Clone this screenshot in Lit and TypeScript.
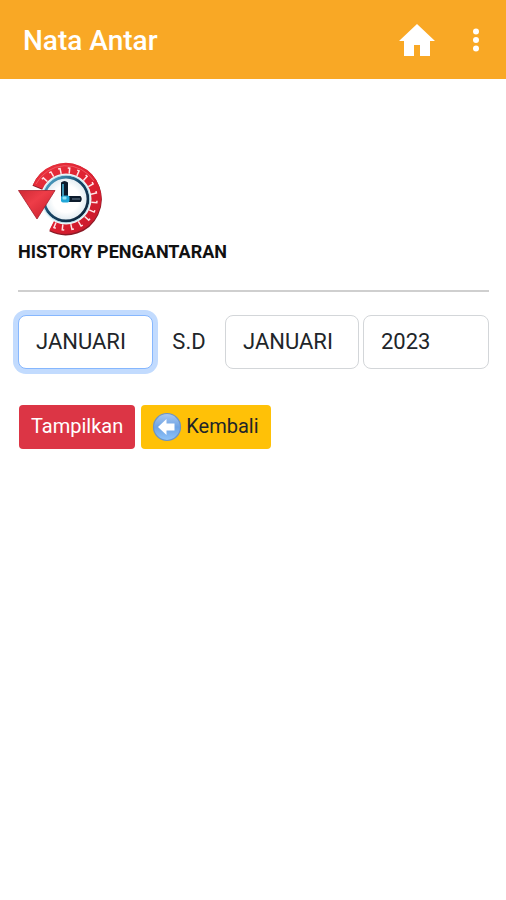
import { LitElement, html, css, svg } from "lit";
import { customElement, state } from "lit/decorators.js";

const MONTHS = [
  "JANUARI", "FEBRUARI", "MARET", "APRIL", "MEI", "JUNI",
  "JULI", "AGUSTUS", "SEPTEMBER", "OKTOBER", "NOVEMBER", "DESEMBER",
];
const YEARS = ["2023", "2022", "2021"];

// Angles in degrees, clockwise from twelve o'clock, of the marks on the red ring.
const TICKS = [-48, -30, -12, 6, 24, 42, 60, 78, 96, 114, 132, 150, 168, 186, 202];

@customElement("history-icon")
export class HistoryIcon extends LitElement {
  static styles = css`
    :host { display: block; }
    .art { display: block; width: 86px; height: 76px; }
  `;
  render() {
    return html`
      <svg class="art" viewBox="0 0 86 76" role="img" aria-label="History">
        <defs>
          <linearGradient id="ring" x1="0" y1="0" x2="1" y2="1">
            <stop offset="0" stop-color="#e8303c" />
            <stop offset="0.6" stop-color="#dc1f30" />
            <stop offset="1" stop-color="#c81a2c" />
          </linearGradient>
          <linearGradient id="rim" x1="0" y1="0" x2="1" y2="1">
            <stop offset="0" stop-color="#5cb8dc" />
            <stop offset="0.45" stop-color="#17486a" />
            <stop offset="1" stop-color="#0b1c30" />
          </linearGradient>
          <linearGradient id="arrow" x1="0" y1="0" x2="1" y2="1">
            <stop offset="0" stop-color="#cf2a35" />
            <stop offset="0.4" stop-color="#ee3d48" />
            <stop offset="1" stop-color="#c41a29" />
          </linearGradient>
          <radialGradient id="face">
            <stop offset="0.6" stop-color="#ffffff" />
            <stop offset="1" stop-color="#dfeaf0" />
          </radialGradient>
        </defs>
        <path d="M20 27A30 30 0 1 1 34 65" fill="none" stroke="#8a1a26" stroke-width="12" />
        <path d="M20 26A30 30 0 1 1 34 64" fill="none" stroke="url(#ring)" stroke-width="11" />
        <path d="M18 23A33.500 33.500 0 0 1 76 20" fill="none" stroke="#f26b72" stroke-width="1" opacity="0.7" />
        ${TICKS.map((a) => svg`
          <path d="M46.500 7h2v5.500" fill="none" stroke="#ffe3e5" stroke-width="1.500"
            transform="rotate(${a} 48 38)" />`)}
        <circle cx="48" cy="38" r="25.500" fill="#f1f8fa" />
        <circle cx="48" cy="38" r="22" fill="url(#face)" stroke="url(#rim)" stroke-width="2.800" />
        <circle cx="48" cy="38" r="23.800" fill="none" stroke="#a9d8e8" stroke-width="0.800" />
        <path d="M43 21.500q3.500-3 7 0v15h-7z" fill="#0c1b2c" />
        <path d="M45 23v13" stroke="#51bfe2" stroke-width="1.500" />
        <path d="M47 35h15.500q2.500 3 0 6H47z" fill="#0c1b2c" />
        <path d="M54 38h8" stroke="#5c7182" stroke-width="1.200" />
        <rect x="43" y="34.500" width="8.500" height="7" rx="2" fill="#20a7d8" />
        <rect x="44.500" y="35.500" width="4" height="3" rx="1" fill="#8fe3f6" />
        <path d="M0.500 29.500H37L19 58z" fill="url(#arrow)" stroke="#a51c29" stroke-width="0.800" stroke-linejoin="round" />
      </svg>
    `;
  }
}

@customElement("app-root")
export class AppRoot extends LitElement {
  @state() private active = "from";

  static styles = css`
    :host {
      display: block;
      min-height: 100vh;
      background: #fff;
      color: #212529;
      font-family: Roboto, "Liberation Sans", sans-serif;
    }
    .bar {
      display: flex;
      align-items: center;
      padding: 22px 12px 19px 23px;
      box-sizing: border-box;
      background: #f9a825;
      color: #fff;
    }
    .title {
      flex: 1;
      margin: 0;
      font-size: 28px;
      line-height: 38px;
      font-weight: 500;
    }
    .icon-button {
      display: block;
      padding: 0;
      border: 0;
      background: none;
      color: inherit;
      cursor: pointer;
    }
    .icon-button svg { display: block; fill: currentColor; }
    .home { margin-right: 23px; }
    .content { padding: 82px 17px 0 18px; }
    .heading {
      margin: 3px 0 0;
      font-size: 18px;
      line-height: 24px;
      font-weight: 700;
      color: #111;
    }
    .rule {
      margin: 26px 0 23px;
      border: 0;
      border-top: 2px solid #cfcfcf;
    }
    .filters {
      display: grid;
      grid-template-columns: 135fr 72fr 134fr 4px 126fr;
      align-items: center;
      font-size: 22px;
      line-height: 28px;
    }
    .select {
      width: 100%;
      height: 54px;
      margin: 0;
      padding: 0 17px;
      box-sizing: border-box;
      appearance: none;
      border: 1px solid #d3d6d9;
      border-radius: 8px;
      outline: 0;
      background: #fff;
      color: #212529;
      font: inherit;
    }
    .select.active {
      border-color: #86b7fe;
      box-shadow: 0 0 0 5px #c2dbfe;
    }
    .year { grid-column: 5; }
    .until { text-align: center; }
    .actions { display: flex; gap: 6px; margin-top: 36px; padding-left: 1px; }
    .button {
      display: flex;
      align-items: center;
      gap: 4px;
      height: 44px;
      padding: 0 12px 2px;
      border: 0;
      border-radius: 4px;
      font: inherit;
      font-size: 20px;
      line-height: 24px;
      cursor: pointer;
    }
    .show { background: #dc3545; color: #fff; }
    .back { background: #ffc107; color: #212529; }
    .back svg { display: block; margin: 2px 0 0 -1px; }
  `;

  private monthSelect(id: string, label: string) {
    return html`
      <select
        class="select ${this.active === id ? "active" : ""}"
        aria-label=${label}
        @focus=${() => (this.active = id)}
      >
        ${MONTHS.map((m) => html`<option>${m}</option>`)}
      </select>
    `;
  }

  render() {
    return html`
      <header class="bar">
        <h1 class="title">Nata Antar</h1>
        <button class="icon-button home" aria-label="Home">
          <svg width="36" height="34" viewBox="0 0 36 34">
            <path d="M18 0L0 17h5v15h10V21h6v11h10V17h5z" />
          </svg>
        </button>
        <button class="icon-button" aria-label="Menu">
          <svg width="36" height="36" viewBox="0 0 36 36">
            <circle cx="18" cy="8.500" r="3" />
            <circle cx="18" cy="17" r="3" />
            <circle cx="18" cy="25.500" r="3" />
          </svg>
        </button>
      </header>
      <main class="content">
        <history-icon></history-icon>
        <h2 class="heading">HISTORY PENGANTARAN</h2>
        <hr class="rule" />
        <div class="filters">
          ${this.monthSelect("from", "Dari bulan")}
          <span class="until">S.D</span>
          ${this.monthSelect("to", "Sampai bulan")}
          <select
            class="select year ${this.active === "year" ? "active" : ""}"
            aria-label="Tahun"
            @focus=${() => (this.active = "year")}
          >
            ${YEARS.map((y) => html`<option>${y}</option>`)}
          </select>
        </div>
        <div class="actions">
          <button class="button show">Tampilkan</button>
          <button class="button back">
            <svg width="30" height="30" viewBox="0 0 30 30" aria-hidden="true">
              <defs>
                <linearGradient id="ball" x1="0" y1="0" x2="0" y2="1">
                  <stop offset="0" stop-color="#a9c8f0" />
                  <stop offset="0.5" stop-color="#6ea3e4" />
                  <stop offset="1" stop-color="#8fc4fa" />
                </linearGradient>
              </defs>
              <circle cx="15" cy="15" r="13.500" fill="url(#ball)" stroke="#6d93c4" stroke-width="1.200" />
              <path d="M6 15l8.500-8v4.500H22.500v7H14.500V23z" fill="#fff" />
            </svg>
            Kembali
          </button>
        </div>
      </main>
    `;
  }
}
